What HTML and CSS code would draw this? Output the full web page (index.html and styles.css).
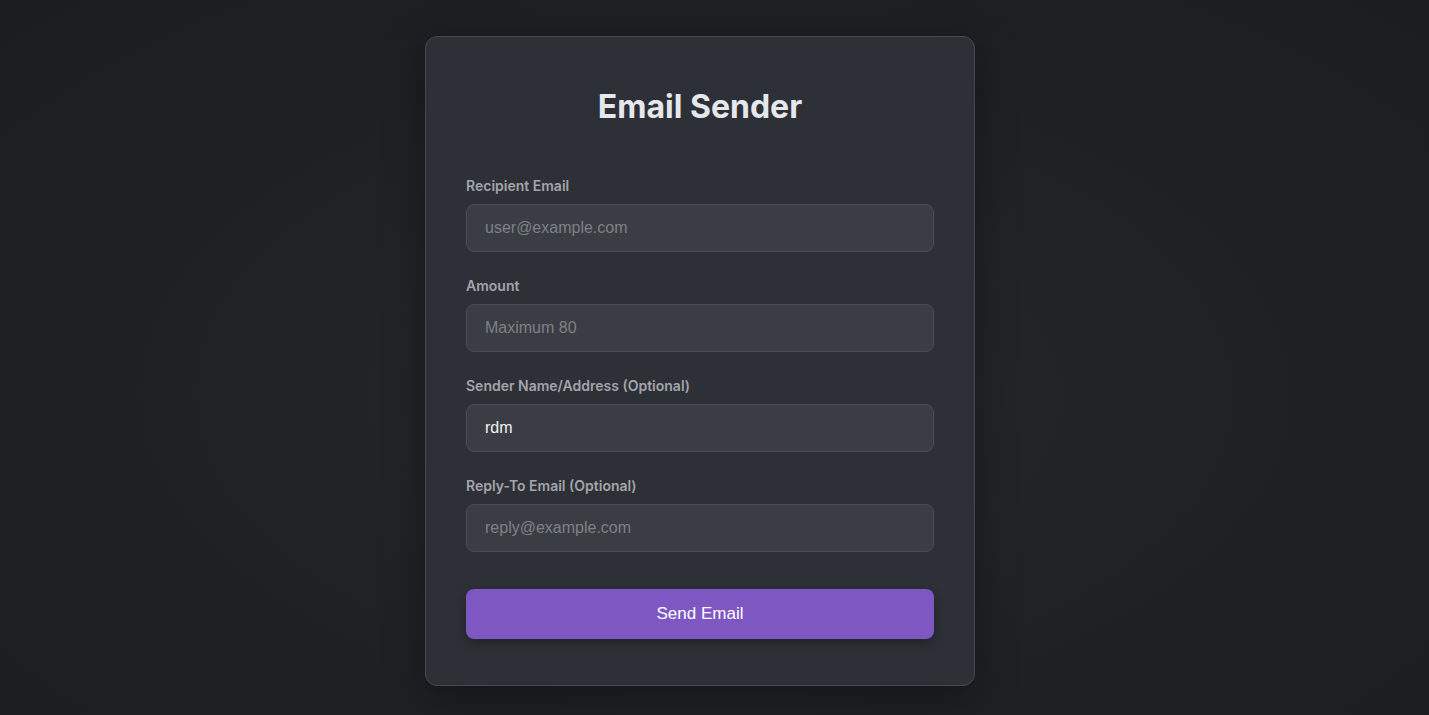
FILE: index.html
```html
<!DOCTYPE html>
<html lang="en">
<head>
<meta charset="utf-8">
<title>Email Sender</title>
<link rel="stylesheet" href="styles.css">
</head>
<body>
<main class="page">
  <form class="card">
    <h1 class="title">Email Sender</h1>
    <div class="field">
      <label class="label" for="to">Recipient Email</label>
      <input class="input" id="to" type="text" placeholder="user@example.com">
    </div>
    <div class="field">
      <label class="label" for="amount">Amount</label>
      <input class="input" id="amount" type="text" placeholder="Maximum 80">
    </div>
    <div class="field">
      <label class="label" for="sender">Sender Name/Address (Optional)</label>
      <input class="input" id="sender" type="text" value="rdm">
    </div>
    <div class="field">
      <label class="label" for="reply">Reply-To Email (Optional)</label>
      <input class="input" id="reply" type="text" placeholder="reply@example.com">
    </div>
    <button class="button" type="button">Send Email</button>
  </form>
</main>
</body>
</html>
```

FILE: styles.css
```css
* { box-sizing: border-box; }
html, body { margin: 0; height: 100%; }
body {
  background: radial-gradient(ellipse at 50% 55%, #26282d 0%, #1f2024 60%, #1c1d21 100%);
  font-family: Inter, "Noto Sans", sans-serif;
  overflow: hidden;
}
.page {
  display: flex;
  justify-content: center;
  padding: 36px 29px 0 0;
}
.card {
  width: 550px;
  background: #2d3036;
  border: 1px solid #46484d;
  border-radius: 12px;
  padding: 40px 40px 46px;
  box-shadow: 0 10px 40px rgba(0, 0, 0, 0.35);
  display: flex;
  flex-direction: column;
}
.title {
  margin: 10px 0 49px;
  font-size: 32px;
  line-height: 40px;
  font-weight: 700;
  text-align: center;
  color: #e6e7eb;
}
.field {
  display: flex;
  flex-direction: column;
  gap: 8px;
  margin-bottom: 24px;
}
.field:last-of-type { margin-bottom: 37px; }
.label {
  font-size: 14px;
  line-height: 20px;
  font-weight: 600;
  color: #a3a5aa;
}
.input {
  height: 48px;
  width: 100%;
  background: #3a3d43;
  border: 1px solid #4a4d53;
  border-radius: 8px;
  padding: 0 18px;
  font-family: "Liberation Sans", Arial, sans-serif;
  font-size: 16px;
  color: #f2f2f2;
  outline: none;
}
.input::placeholder { color: #7e8187; }
.button {
  height: 50px;
  width: 100%;
  border: none;
  border-radius: 8px;
  background: #7e57c2;
  color: #ffffff;
  font-family: "Liberation Sans", Arial, sans-serif;
  font-size: 17px;
  box-shadow: 0 4px 12px rgba(0, 0, 0, 0.3);
  cursor: pointer;
}
```
